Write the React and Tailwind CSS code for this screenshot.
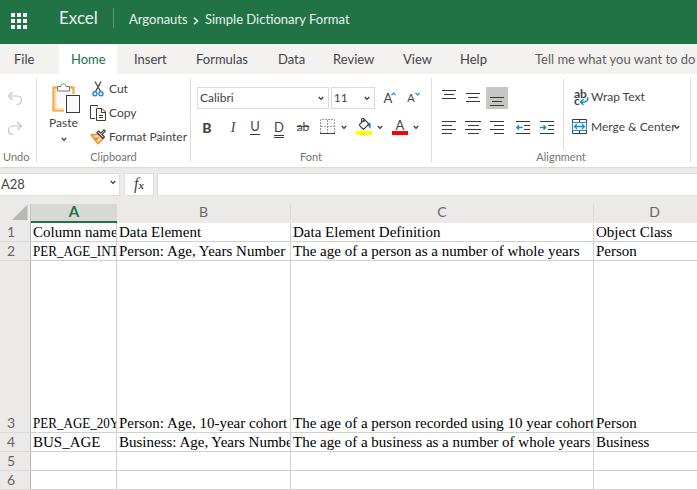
import React from "react";

const tabs = [
  { label: "File", box: "w-[59px] pl-[14px]" },
  { label: "Home", box: "w-[58px] pl-3 bg-white text-[#217346]" },
  { label: "Insert", box: "w-[62px] pl-[17px]" },
  { label: "Formulas", box: "w-[82px] pl-[17px]" },
  { label: "Data", box: "w-[55px] pl-[17px]" },
  { label: "Review", box: "w-[70px] pl-[17px]" },
  { label: "View", box: "w-[57px] pl-[17px]" },
  { label: "Help", box: "w-[75px] pl-[17px]" },
];

const rows = [
  { n: 1, h: "h-[19px]", cells: ["Column name", "Data Element", "Data Element Definition", "Object Class"] },
  { n: 2, h: "h-[19px]", cells: ["PER_AGE_INT", "Person: Age, Years Number", "The age of a person as a number of whole years", "Person"] },
  { n: 3, h: "h-[172px]", cells: ["PER_AGE_20Y", "Person: Age, 10-year cohort", "The age of a person recorded using 10 year cohorts", "Person"] },
  { n: 4, h: "h-[19px]", cells: ["BUS_AGE", "Business: Age, Years Number", "The age of a business as a number of whole years", "Business"] },
  { n: 5, h: "h-[19px]", cells: ["", "", "", ""] },
  { n: 6, h: "h-[19px]", cells: ["", "", "", ""] },
];

const colWidths = ["w-[86px]", "w-[174px]", "w-[303px]", "w-[104px]"];

function Icon({ w, h, className = "", children }) {
  return (
    <svg width={w} height={h} viewBox={`0 0 ${w} ${h}`} fill="none" stroke="#3b3a39" className={`shrink-0 ${className}`}>
      {children}
    </svg>
  );
}

function Caret({ className = "" }) {
  return (
    <Icon w={6} h={5} className={className}>
      <path d="M.8 1 L3 3.4 L5.2 1" strokeWidth="1.3" />
    </Icon>
  );
}

// Each entry is [x, y, width] of one horizontal stroke.
function Lines({ items, className = "" }) {
  return (
    <Icon w={16} h={16} className={className}>
      {items.map(([x, y, w]) => (
        <rect key={`${x}-${y}`} x={x} y={y} width={w} height="1" fill="#3b3a39" stroke="none" />
      ))}
    </Icon>
  );
}

function IndentIcon({ out, className = "" }) {
  return (
    <Icon w={16} h={16} className={className}>
      <g fill="#3b3a39" stroke="none">
        <rect x="1" y="1" width="14" height="1" />
        <rect x="9" y="5" width="6" height="1" />
        <rect x="9" y="9" width="6" height="1" />
        <rect x="1" y="13" width="14" height="1" />
      </g>
      <path d={out ? "M7.5 7.5H2M4 5.3L1.8 7.5L4 9.7" : "M1 7.5H6.5M4.5 5.3L6.7 7.5L4.5 9.7"} stroke="#1e8bcd" strokeWidth="1.4" />
    </Icon>
  );
}

function GroupLabel({ children }) {
  return <div className="mt-auto h-[14px] text-center text-[11px] leading-[14px] text-[#767574]">{children}</div>;
}

function Divider() {
  return <div className="mt-1 h-[84px] w-px shrink-0 bg-[#dcdbda]" />;
}

function UndoGroup() {
  return (
    <div className="flex w-9 shrink-0 flex-col pb-[3px]">
      <Icon w={16} h={16} className="ml-[7px] mt-4">
        <path d="M5.5 2L1.5 6L5.5 10M1.5 6H10C16 6 16 14.5 9.5 14.5" stroke="#c4c3c2" strokeWidth="1.2" />
      </Icon>
      <Icon w={16} h={16} className="ml-[7px] mt-[14px]">
        <path d="M10.5 2L14.5 6L10.5 10M14.5 6H6C0 6 0 14.5 6 14.5" stroke="#c4c3c2" strokeWidth="1.2" />
      </Icon>
      <div className="mt-auto h-[14px] pl-[3px] text-[11px] leading-[14px] text-[#767574]">Undo</div>
    </div>
  );
}

function ClipboardGroup() {
  return (
    <div className="flex w-[153px] shrink-0 flex-col pb-[3px]">
      <div className="flex">
        <div className="flex w-[53px] flex-col items-center pt-[9px]">
          <Icon w={28} h={30} className="ml-[4px]">
            <rect x="1.5" y="4.5" width="20" height="23" fill="#fafafa" stroke="#f2ae4e" strokeWidth="2.4" />
            <path d="M3.5 6V26H20" stroke="#fbdf9b" strokeWidth="1.5" />
            <path d="M5.5 8V3.5H9C9 -.2 14 -.2 14 3.5H17.5V8Z" fill="#fff" stroke="#777" />
            <rect x="12" y="11" width="16" height="19" fill="#fff" stroke="none" />
            <rect x="14.5" y="12.5" width="13" height="17" fill="#fafafa" />
          </Icon>
          <span className="mt-[2px] h-4 text-[12px] leading-4 text-[#444]">Paste</span>
          <Caret className="mt-[6px]" />
        </div>
        <div className="flex flex-col pt-[3px] text-[12px] text-[#444]">
          <div className="flex h-6 items-center">
            <Icon w={16} h={18}>
              <path d="M5 1.5L10.5 11.5M11 1.5L5.5 11.5" strokeWidth="1.2" />
              <path d="M5 2L8.5 8L11 2" stroke="#777" strokeWidth=".7" />
              <circle cx="5" cy="13.7" r="2" stroke="#1e8bcd" strokeWidth="1.4" />
              <circle cx="11" cy="13.7" r="2" stroke="#1e8bcd" strokeWidth="1.4" />
            </Icon>
            <span className="ml-[3px]">Cut</span>
          </div>
          <div className="flex h-6 items-center">
            <Icon w={16} h={16}>
              <path d="M7.5 1.5V.5H.5V13.5H5" />
              <path d="M6.5 3.5H12L15.5 7V15.5H6.5Z" fill="#fafafa" />
              <path d="M11.5 3.5V7.5H15.5M9 10.5H13M9 12.5H13" />
            </Icon>
            <span className="ml-[3px]">Copy</span>
          </div>
          <div className="flex h-6 items-center">
            <Icon w={16} h={16}>
              <path d="M1 6L8 5L13 10L8 14.8Z" fill="#fbd9a0" stroke="#ee8a31" strokeWidth="1.3" />
              <path d="M4 8.5H9.5L6 12Z" fill="#ee8a31" stroke="none" />
              <path d="M7 3.5L13 9.5L14.5 8L12 5.5L15.3 2.2L14 .9L10.7 4.2L8.5 2Z" fill="#eee" strokeWidth="1.1" />
            </Icon>
            <span className="ml-[3px] whitespace-nowrap">Format Painter</span>
          </div>
        </div>
      </div>
      <GroupLabel>Clipboard</GroupLabel>
    </div>
  );
}

function FontGroup() {
  return (
    <div className="flex w-[240px] shrink-0 flex-col pb-[3px] text-[#444]">
      <div className="mt-[13px] flex h-[22px] items-center pl-[6px] text-[12px]">
        <div className="flex h-[22px] w-[133px] items-center border border-[#dcdbda] pl-[2px] pr-1">
          <span>Calibri</span>
          <Caret className="ml-auto" />
        </div>
        <div className="ml-[2px] flex h-[22px] w-[45px] items-center border border-[#dcdbda] pl-[2px] pr-1">
          <span>11</span>
          <Caret className="ml-auto" />
        </div>
        <div className="ml-2 flex w-6 items-start">
          <span className="text-[13px] leading-4">A</span>
          <Icon w={5} h={4} className="-ml-px mt-[2px]"><path d="M.4 3.2L2.5 1L4.6 3.2" stroke="#1e8bcd" strokeWidth="1.2" /></Icon>
        </div>
        <div className="flex w-6 items-start">
          <span className="text-[11px] leading-4">A</span>
          <Icon w={5} h={4} className="mt-[2px]"><path d="M.4 .8L2.5 3L4.6 .8" stroke="#1e8bcd" strokeWidth="1.2" /></Icon>
        </div>
      </div>
      <div className="mt-[7px] flex h-[22px] items-center pl-1 text-[13px]">
        <span className="w-6 text-center text-[14px] font-black">B</span>
        <span className="w-6 pl-1 text-center font-['Liberation_Serif',serif] text-[14px] italic">I</span>
        <span className="flex w-6 justify-center"><span className="h-[15px] border-b border-[#3b3a39] text-[13px] leading-[13px]">U</span></span>
        <span className="flex w-6 justify-center"><span className="mt-1 h-[17px] border-b-3 border-double border-[#3b3a39] text-[13px] leading-[13px]">D</span></span>
        <span className="flex w-6 justify-center"><span className="px-px text-[12px] line-through">ab</span></span>
        <Icon w={16} h={16} className="ml-[5px]">
          <path d="M.5 14V.5H14.5V14M7.5 1V14M1 7.5H14" stroke="#999" strokeDasharray="2 1" />
          <path d="M0 14.5H15" />
        </Icon>
        <Caret className="ml-[5px]" />
        <Icon w={17} h={18} className="ml-[9px]">
          <path d="M3 7L8.5 1.5L13 6L7.5 11.5L3 7M5.5 4.5V1.5C5.5 0 8 0 8 1.5V4" strokeWidth="1.1" />
          <path d="M11.5 5H14.5V11L11.8 7Z" fill="#1768a5" stroke="none" />
          <rect x="0" y="13" width="16" height="4" fill="#ffff00" stroke="none" />
        </Icon>
        <Caret className="ml-1" />
        <span className="ml-[9px] flex w-4 flex-col items-center">
          <span className="mt-[-2px] h-[13px] leading-[15px]">A</span>
          <span className="h-1 w-4 bg-[#ff0000]" />
        </span>
        <Caret className="ml-[5px]" />
      </div>
      <GroupLabel>Font</GroupLabel>
    </div>
  );
}

function AlignmentGroup() {
  return (
    <div className="flex w-[258px] shrink-0 flex-col pb-[3px] text-[12px] text-[#444]">
      <div className="flex">
        <div className="flex w-[131px] flex-col pl-[9px] pt-[13px]">
          <div className="flex h-[22px] items-center">
            <Lines items={[[1, 0, 14], [3, 4, 10], [1, 8, 14]]} />
            <Lines className="ml-2" items={[[1, 3, 14], [3, 7, 10], [1, 11, 14]]} />
            <div className="ml-[5px] flex h-[22px] w-[22px] items-center justify-center bg-[#c8c6c4]">
              <Lines items={[[1, 7, 14], [3, 11, 10], [1, 15, 14]]} />
            </div>
          </div>
          <div className="mt-[8px] flex h-[22px] items-center">
            <Lines items={[[1, 1, 14], [1, 5, 10], [1, 9, 14], [1, 13, 10]]} />
            <Lines className="ml-2" items={[[0, 1, 16], [3, 5, 11], [0, 9, 16], [3, 13, 11]]} />
            <Lines className="ml-2" items={[[1, 1, 14], [5, 5, 10], [1, 9, 14], [5, 13, 10]]} />
            <IndentIcon out className="ml-[10px]" />
            <IndentIcon className="ml-2" />
          </div>
        </div>
        <div className="mt-[5px] h-[71px] w-px bg-[#dcdbda]" />
        <div className="flex flex-col pt-[12px]">
          <div className="flex h-[22px] items-center">
            <span className="relative ml-[10px] h-[17px] w-[15px] text-[12px] font-bold leading-[9px]">
              <span className="block">ab</span>
              <span className="block leading-[6px]">c</span>
              <svg width="10" height="9" viewBox="0 0 10 9" fill="none" className="absolute bottom-0 right-0">
                <path d="M8.5 0C10 4 6 6 1.5 5M4.5 2L1.5 5L4.5 8" stroke="#1e8bcd" strokeWidth="1.5" />
              </svg>
            </span>
            <span className="ml-[2px] whitespace-nowrap">Wrap Text</span>
          </div>
          <div className="mt-2 flex h-[22px] items-center">
            <Icon w={16} h={16} className="ml-[8px]">
              <path d="M.5 3V.5H14.5V3M7.5 .5V3M.5 12V14.5H14.5V12M7.5 12V14.5" />
              <rect x=".5" y="3.5" width="14" height="8" stroke="#1e8bcd" />
              <path d="M2.5 7.5H12.5M5 5L2.5 7.5L5 10M10 5L12.5 7.5L10 10" stroke="#1e8bcd" strokeWidth="1.3" />
            </Icon>
            <span className="ml-[3px] w-[83px] whitespace-nowrap">Merge &amp; Center</span>
            <Caret />
          </div>
        </div>
      </div>
      <GroupLabel>Alignment</GroupLabel>
    </div>
  );
}

function FormulaBar() {
  return (
    <div className="flex h-7 bg-[#ebeae9] pt-[5px]">
      <div className="flex h-[23px] w-[120px] items-center border-y border-r border-[#e1dfdd] bg-white pl-px pr-[3px] text-[13px] text-[#444]">
        <span>A28</span>
        <Caret className="ml-auto mb-1" />
      </div>
      <div className="ml-1 flex h-[23px] w-[30px] items-center justify-center border border-[#e1dfdd] bg-white pb-[2px] font-['Liberation_Serif',serif] text-[#444] italic">
        <span className="text-[16px]">f</span>
        <span className="mt-1 text-[11px] font-bold">x</span>
      </div>
      <div className="ml-[3px] h-[23px] flex-1 border border-r-0 border-[#e1dfdd] bg-white" />
    </div>
  );
}

function Sheet() {
  return (
    <div>
      <div className="flex h-[27px] bg-[#ebeae9] pt-2 text-[14px] text-[#666]">
        <div className="flex w-[31px] shrink-0 items-start justify-end border-r border-[#c4c4c4] pr-[2px]">
          <svg width="16" height="16" className="block"><path d="M15.5 .5V16H0Z" fill="#b7b7b7" /></svg>
        </div>
        <div className="h-[19px] w-[86px] shrink-0 border-b-2 border-[#217346] bg-[#d9d8d7] text-center text-[15px] font-bold leading-[15px] text-[#217346]">A</div>
        <div className="h-4 w-[174px] shrink-0 border-r border-[#dcdbda] text-center leading-[15px]">B</div>
        <div className="h-4 w-[303px] shrink-0 border-r border-[#dcdbda] text-center leading-[15px]">C</div>
        <div className="h-4 w-[121px] shrink-0 text-center leading-[15px]">D</div>
      </div>
      {rows.map((row) => (
        <div key={row.n} className={`flex ${row.h}`}>
          <div className="flex w-[31px] shrink-0 items-end border-r border-b border-r-[#b5b5b5] border-b-[#dcdbda] bg-[#ebeae9] pl-[7px] text-[14px] leading-[18px] text-[#666]">{row.n}</div>
          {row.cells.map((cell, i) => (
            <div key={i} className={`flex shrink-0 items-end overflow-hidden border-r border-b border-[#d1d1d1] pl-[2px] font-['Liberation_Serif',serif] text-[15px] leading-[18px] whitespace-nowrap text-black ${colWidths[i]}`}>
              <span className={i === 0 && cell.startsWith("PER") ? "inline-block origin-left scale-x-[0.87]" : ""}>{cell}</span>
            </div>
          ))}
        </div>
      ))}
    </div>
  );
}

export default function App() {
  return (
    <div className="h-[490px] w-[697px] overflow-hidden bg-white font-[Lato,sans-serif]">
      <header className="flex h-11 bg-[#217346] text-[#e9f2ed]">
        <Icon w={16} h={16} className="ml-[11px] mt-[13px]">
          {[0, 6, 12].map((y) => [0, 6, 12].map((x) => <rect key={`${x}-${y}`} x={x} y={y} width="4" height="4" fill="#fff" stroke="none" />))}
        </Icon>
        <div className="ml-8 mt-[6px] w-[54px] text-[17px] leading-6">Excel</div>
        <div className="mt-2 h-5 w-px bg-[#5c9877]" />
        <div className="mt-[10px] flex h-5 items-center pl-[15px] text-[13px] whitespace-nowrap">
          <span className="w-[64px]">Argonauts</span>
          <Icon w={6} h={8} className="mt-px"><path d="M1 .8L4.6 4L1 7.2" stroke="#e9f2ed" strokeWidth="1.5" /></Icon>
          <span className="ml-[6px]">Simple Dictionary Format</span>
        </div>
      </header>
      <nav className="flex h-[30px] bg-[#f3f2f1] text-[13px] leading-[31px] text-[#444]">
        {tabs.map((t) => (
          <div key={t.label} className={`shrink-0 ${t.box}`}>{t.label}</div>
        ))}
        <div className="pl-[17px] whitespace-nowrap text-[#605e5c]">Tell me what you want to do</div>
      </nav>
      <section className="flex h-[94px] border-b border-[#dcdbda]">
        <UndoGroup />
        <Divider />
        <ClipboardGroup />
        <Divider />
        <FontGroup />
        <Divider />
        <AlignmentGroup />
        <Divider />
      </section>
      <FormulaBar />
      <Sheet />
    </div>
  );
}
